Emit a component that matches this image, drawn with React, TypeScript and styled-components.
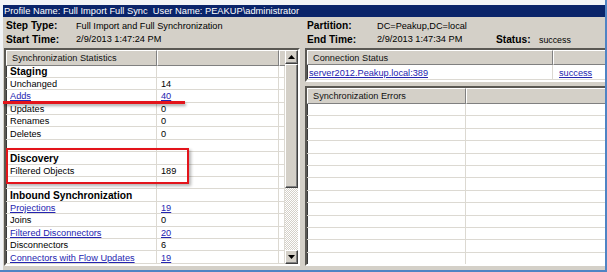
import React from 'react';
import styled, { createGlobalStyle } from 'styled-components';

const Global = createGlobalStyle`
  html, body { margin: 0; padding: 0; background: #ffffff; }
  body { width: 607px; height: 272px; overflow: hidden; }
`;

const ROW_H = 12.4;
const LINK = '#2424b0';
const GRID = '#dcd9d2';
const FACE = '#d4d0c8';

const Frame = styled.div`
  position: relative;
  width: 607px;
  height: 272px;
  box-sizing: border-box;
  padding: 5px 0 0 3px;
  background: #f2f4f7;
  border-right: 2px solid #4f84c4;
  border-bottom: 2px solid #4f84c4;
  font-family: "Liberation Sans", Arial, sans-serif;
  overflow: hidden;
`;

const Window = styled.div`
  height: 100%;
  background: ${FACE};
  display: flex;
  flex-direction: column;
  overflow: hidden;
`;

const TitleBar = styled.div`
  flex: none;
  height: 12px;
  background: #0a246a;
  color: #ffffff;
  font-size: 9.3px;
  line-height: 12px;
  padding-left: 1px;
  white-space: pre;
`;

const Info = styled.div`
  flex: none;
  height: 31px;
  box-sizing: border-box;
  padding-top: 2px;
  display: grid;
  grid-template-columns: 301px 1fr;
`;

const InfoCol = styled.div`
  padding-left: 3px;
  display: flex;
  flex-direction: column;
`;

const InfoRow = styled.div`
  display: flex;
  align-items: center;
  height: 13.5px;
  white-space: nowrap;
`;

const Label = styled.span<{ $w: number }>`
  flex: none;
  width: ${(p) => p.$w}px;
  font-weight: bold;
  font-size: 10.2px;
  color: #000;
`;

const Value = styled.span<{ $w?: number; $small?: boolean }>`
  flex: none;
  ${(p) => (p.$w ? `width: ${p.$w}px;` : '')}
  font-size: ${(p) => (p.$small ? '8.8px' : '9.2px')};
  ${(p) => (p.$small ? 'padding-top: 2px;' : '')}
  color: #000;
`;

const Panels = styled.div`
  flex: 1;
  min-height: 0;
  display: flex;
  gap: 5px;
  padding: 0 0 4px 1px;
`;

const Sunken = styled.div<{ $h?: number }>`
  position: relative;
  box-sizing: border-box;
  ${(p) => (p.$h ? `height: ${p.$h}px; flex: none;` : 'flex: 1; min-height: 0;')}
  border-style: solid;
  border-width: 2px;
  border-color: #5a5853 #ffffff #ffffff #5a5853;
  box-shadow: inset 1px 1px 0 #3c3c3c;
  background: #ffffff;
  overflow: hidden;
  display: flex;
`;

const LeftPanel = styled(Sunken)`
  width: 296px;
  flex: none;
  height: 100%;
`;

const RightCol = styled.div`
  width: 304px;
  flex: none;
  display: flex;
  flex-direction: column;
  gap: 4px;
`;

const List = styled.div`
  flex: 1;
  min-width: 0;
  display: flex;
  flex-direction: column;
  overflow: hidden;
`;

const HeaderRow = styled.div<{ $h: number }>`
  flex: none;
  display: flex;
  height: ${(p) => p.$h}px;
`;

const HeaderCell = styled.div<{ $w?: number }>`
  ${(p) => (p.$w ? `width: ${p.$w}px; flex: none;` : 'flex: 1;')}
  box-sizing: border-box;
  background: ${FACE};
  border-top: 1px solid #ffffff;
  border-left: 1px solid #ffffff;
  border-right: 1px solid #808080;
  border-bottom: 1px solid #808080;
  box-shadow: 1px 0 0 #404040;
  font-size: 9.2px;
  color: #111;
  display: flex;
  align-items: center;
  padding-left: 5px;
  white-space: nowrap;
  overflow: hidden;
`;

const Row = styled.div<{ $h?: number }>`
  flex: none;
  display: flex;
  height: ${(p) => p.$h ?? ROW_H}px;
  box-sizing: border-box;
  border-bottom: 1px solid ${GRID};
`;

const Cell = styled.div<{ $w?: number; $pad?: number }>`
  ${(p) => (p.$w ? `width: ${p.$w}px; flex: none;` : 'flex: 1;')}
  box-sizing: border-box;
  border-right: 1px solid ${GRID};
  padding-left: ${(p) => p.$pad ?? 4}px;
  padding-top: 1px;
  display: flex;
  align-items: center;
  font-size: 9.2px;
  color: #000;
  white-space: nowrap;
  overflow: hidden;
`;

const Section = styled.span`
  font-weight: bold;
  font-size: 10.2px;
`;

const Link = styled.span`
  color: ${LINK};
  text-decoration: underline;
  text-underline-offset: 1px;
`;

const ScrollBar = styled.div`
  flex: none;
  width: 13px;
  display: flex;
  flex-direction: column;
  background-color: #ebe9e5;
  background-image: repeating-conic-gradient(#ffffff 0 25%, ${FACE} 0 50%);
  background-size: 2px 2px;
`;

const Raised = styled.div<{ $h?: number }>`
  box-sizing: border-box;
  ${(p) => (p.$h ? `height: ${p.$h}px; flex: none;` : 'flex: 1;')}
  background: ${FACE};
  border-top: 1px solid #ffffff;
  border-left: 1px solid #ffffff;
  border-right: 1px solid #404040;
  border-bottom: 1px solid #404040;
  box-shadow: inset -1px -1px 0 #808080;
  display: flex;
  align-items: center;
  justify-content: center;
`;

const Track = styled.div`
  flex: 1;
`;

const Arrow = styled.svg`
  display: block;
`;

const Underline = styled.div`
  position: absolute;
  left: 3px;
  top: 101px;
  width: 182px;
  height: 3px;
  background: #e3141b;
  box-shadow: 1px 2px 3px rgba(0, 0, 0, 0.35);
`;

const Highlight = styled.div`
  position: absolute;
  left: 6px;
  top: 148px;
  width: 183px;
  height: 36px;
  box-sizing: border-box;
  border: 2px solid #e3141b;
  box-shadow: 2px 2px 3px rgba(0, 0, 0, 0.3);
`;

type Stat =
  | { kind: 'section'; label: string }
  | { kind: 'blank' }
  | { kind: 'item'; label: string; value: string; link?: boolean };

const stats: Stat[] = [
  { kind: 'section', label: 'Staging' },
  { kind: 'item', label: 'Unchanged', value: '14' },
  { kind: 'item', label: 'Adds', value: '40', link: true },
  { kind: 'item', label: 'Updates', value: '0' },
  { kind: 'item', label: 'Renames', value: '0' },
  { kind: 'item', label: 'Deletes', value: '0' },
  { kind: 'blank' },
  { kind: 'section', label: 'Discovery' },
  { kind: 'item', label: 'Filtered Objects', value: '189' },
  { kind: 'blank' },
  { kind: 'section', label: 'Inbound Synchronization' },
  { kind: 'item', label: 'Projections', value: '19', link: true },
  { kind: 'item', label: 'Joins', value: '0' },
  { kind: 'item', label: 'Filtered Disconnectors', value: '20', link: true },
  { kind: 'item', label: 'Disconnectors', value: '6' },
  { kind: 'item', label: 'Connectors with Flow Updates', value: '19', link: true },
  { kind: 'item', label: 'Connectors without Flow Updates', value: '0', link: true },
];

const UpArrow = () => (
  <Arrow width="7" height="4" viewBox="0 0 7 4">
    <path d="M3.5 0 L7 4 L0 4 Z" fill="#000" />
  </Arrow>
);

const DownArrow = () => (
  <Arrow width="7" height="4" viewBox="0 0 7 4">
    <path d="M0 0 L7 0 L3.5 4 Z" fill="#000" />
  </Arrow>
);

const StatsList = () => (
  <List>
    <HeaderRow $h={15.5}>
      <HeaderCell $w={151}>Synchronization Statistics</HeaderCell>
      <HeaderCell $w={122} />
      <HeaderCell />
    </HeaderRow>
    {stats.map((s, i) => {
      const text = (t: string, link?: boolean) => (link ? <Link>{t}</Link> : t);
      return (
        <Row key={i}>
          <Cell $w={151}>
            {s.kind === 'section' && <Section>{s.label}</Section>}
            {s.kind === 'item' && text(s.label, s.link)}
          </Cell>
          <Cell $w={122}>{s.kind === 'item' && text(s.value, s.link)}</Cell>
          <Cell />
        </Row>
      );
    })}
  </List>
);

export default function App() {
  return (
    <>
      <Global />
      <Frame>
        <Window>
          <TitleBar>{'Profile Name: Full Import Full Sync  User Name: PEAKUP\\administrator'}</TitleBar>
          <Info>
            <InfoCol>
              <InfoRow>
                <Label $w={70}>Step Type:</Label>
                <Value>Full Import and Full Synchronization</Value>
              </InfoRow>
              <InfoRow>
                <Label $w={70}>Start Time:</Label>
                <Value>2/9/2013 1:47:24 PM</Value>
              </InfoRow>
            </InfoCol>
            <InfoCol>
              <InfoRow>
                <Label $w={70}>Partition:</Label>
                <Value>DC=Peakup,DC=local</Value>
              </InfoRow>
              <InfoRow>
                <Label $w={70}>End Time:</Label>
                <Value $w={119}>2/9/2013 1:47:34 PM</Value>
                <Label $w={43}>Status:</Label>
                <Value $small>success</Value>
              </InfoRow>
            </InfoCol>
          </Info>
          <Panels>
            <LeftPanel>
              <StatsList />
              <ScrollBar>
                <Raised $h={14}>
                  <UpArrow />
                </Raised>
                <Raised $h={124} />
                <Track />
                <Raised $h={14}>
                  <DownArrow />
                </Raised>
              </ScrollBar>
            </LeftPanel>
            <RightCol>
              <Sunken $h={34}>
                <List>
                  <HeaderRow $h={15}>
                    <HeaderCell $w={246}>Connection Status</HeaderCell>
                    <HeaderCell />
                  </HeaderRow>
                  <Row $h={15}>
                    <Cell $w={246} $pad={2}>
                      <Link>server2012.Peakup.local:389</Link>
                    </Cell>
                    <Cell $pad={6}>
                      <Link>success</Link>
                    </Cell>
                  </Row>
                </List>
              </Sunken>
              <Sunken>
                <List>
                  <HeaderRow $h={16}>
                    <HeaderCell $w={159}>Synchronization Errors</HeaderCell>
                    <HeaderCell />
                  </HeaderRow>
                  {Array.from({ length: 15 }).map((_, i) => (
                    <Row key={i}>
                      <Cell $w={159} />
                      <Cell />
                    </Row>
                  ))}
                </List>
              </Sunken>
            </RightCol>
          </Panels>
        </Window>
        <Underline />
        <Highlight />
      </Frame>
    </>
  );
}
